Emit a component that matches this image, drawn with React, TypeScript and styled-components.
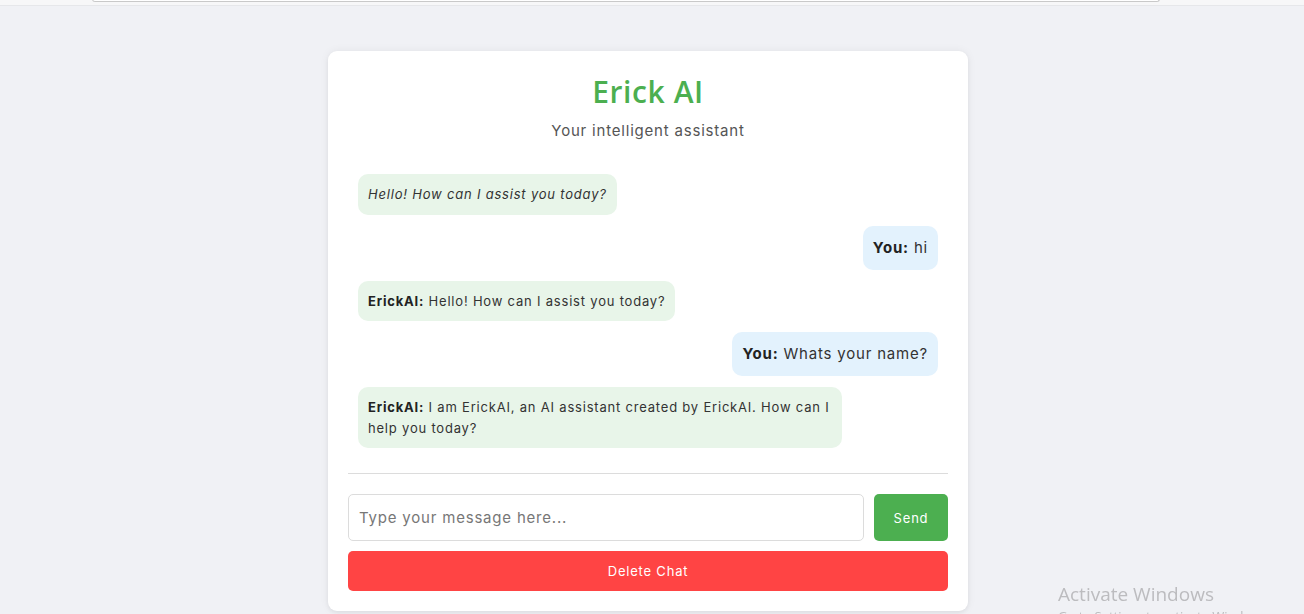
import React from "react";
import styled, { createGlobalStyle } from "styled-components";

const Global = createGlobalStyle`
  html, body { margin: 0; padding: 0; }
  body {
    background: #f0f1f5;
    font-family: "Inter", "Open Sans", sans-serif;
    letter-spacing: 0.05em;
    color: #333;
    overflow: hidden;
  }
`;

const Page = styled.div`
  min-height: 614px;
  display: flex;
  flex-direction: column;
  align-items: center;
  padding-right: 8px;
`;

const TopStrip = styled.div`
  align-self: stretch;
  margin-right: -8px;
  height: 5px;
  background: #f7f7f8;
  border-bottom: 1px solid #e6e7ea;
  display: flex;
  justify-content: flex-start;
  padding-left: 92px;
`;

const TopBarEdge = styled.div`
  width: 1066px;
  height: 2px;
  border: 1px solid #c9c9c9;
  border-top: none;
  border-radius: 0 0 6px 6px;
  background: #ffffff;
  margin-top: -1px;
`;

const Card = styled.main`
  margin-top: 45px;
  width: 640px;
  box-sizing: border-box;
  padding: 20px;
  background: #ffffff;
  border-radius: 9px;
  box-shadow: 0 0 10px rgba(0, 0, 0, 0.06), 0 2px 4px rgba(0, 0, 0, 0.05);
  display: flex;
  flex-direction: column;
`;

const Title = styled.h1`
  margin: 1px 0 0;
  text-align: center;
  font-family: "Open Sans", sans-serif;
  font-weight: 600;
  font-size: 30px;
  line-height: 40px;
  letter-spacing: 0.02em;
  color: #4caf50;
`;

const Subtitle = styled.p`
  margin: 8px 0 0;
  text-align: center;
  font-size: 15px;
  line-height: 22px;
  color: #555;
`;

const ChatBox = styled.section`
  margin-top: 22px;
  padding: 10px 10px 25px;
  border-bottom: 1px solid #dcdcdc;
  display: flex;
  flex-direction: column;
  gap: 11px;
`;

const Bubble = styled.div<{ $user?: boolean }>`
  align-self: ${(p) => (p.$user ? "flex-end" : "flex-start")};
  max-width: 464px;
  padding: 10px;
  border-radius: 10px;
  background: ${(p) => (p.$user ? "#e3f2fd" : "#e8f5e9")};
  font-size: ${(p) => (p.$user ? "15px" : "13px")};
  line-height: ${(p) => (p.$user ? "24px" : "20.6px")};
  color: #333;
`;

const Italic = styled.em`
  font-style: italic;
`;

const Name = styled.strong`
  font-weight: 700;
  color: #222;
`;

const InputRow = styled.div`
  margin-top: 20px;
  display: flex;
  gap: 10px;
`;

const Input = styled.input`
  flex: 1;
  height: 47px;
  box-sizing: border-box;
  padding: 0 10px;
  border: 1px solid #dcdcdc;
  border-radius: 5px;
  font-family: inherit;
  letter-spacing: inherit;
  font-size: 15px;
  color: #333;
  outline: none;
  &::placeholder { color: #777; }
`;

const Button = styled.button<{ $danger?: boolean }>`
  height: ${(p) => (p.$danger ? "40px" : "47px")};
  width: ${(p) => (p.$danger ? "100%" : "74px")};
  border: none;
  border-radius: 5px;
  background: ${(p) => (p.$danger ? "#ff4444" : "#4caf50")};
  color: #fff;
  font-family: inherit;
  letter-spacing: inherit;
  font-size: 13px;
  cursor: pointer;
`;

const DeleteWrap = styled.div`
  margin-top: 10px;
  display: flex;
`;

const Watermark = styled.div`
  position: fixed;
  left: 1058px;
  top: 581px;
  font-family: "Open Sans", "Liberation Sans", sans-serif;
  letter-spacing: 0;
  color: #bcbcbf;
  font-size: 19px;
  line-height: 26px;
  white-space: nowrap;
  pointer-events: none;
`;

const WatermarkSmall = styled.div`
  font-size: 13px;
  line-height: 18px;
`;

export default function App() {
  return (
    <>
      <Global />
      <Page>
        <TopStrip>
          <TopBarEdge />
        </TopStrip>
        <Card>
          <Title>Erick AI</Title>
          <Subtitle>Your intelligent assistant</Subtitle>
          <ChatBox>
            <Bubble>
              <Italic>Hello! How can I assist you today?</Italic>
            </Bubble>
            <Bubble $user>
              <Name>You:</Name> hi
            </Bubble>
            <Bubble>
              <Name>ErickAI:</Name> Hello! How can I assist you today?
            </Bubble>
            <Bubble $user>
              <Name>You:</Name> Whats your name?
            </Bubble>
            <Bubble>
              <Name>ErickAI:</Name> I am ErickAI, an AI assistant created by ErickAI. How can I help you today?
            </Bubble>
          </ChatBox>
          <InputRow>
            <Input placeholder="Type your message here..." />
            <Button>Send</Button>
          </InputRow>
          <DeleteWrap>
            <Button $danger>Delete Chat</Button>
          </DeleteWrap>
        </Card>
        <Watermark>
          Activate Windows
          <WatermarkSmall>Go to Settings to activate Windows.</WatermarkSmall>
        </Watermark>
      </Page>
    </>
  );
}
